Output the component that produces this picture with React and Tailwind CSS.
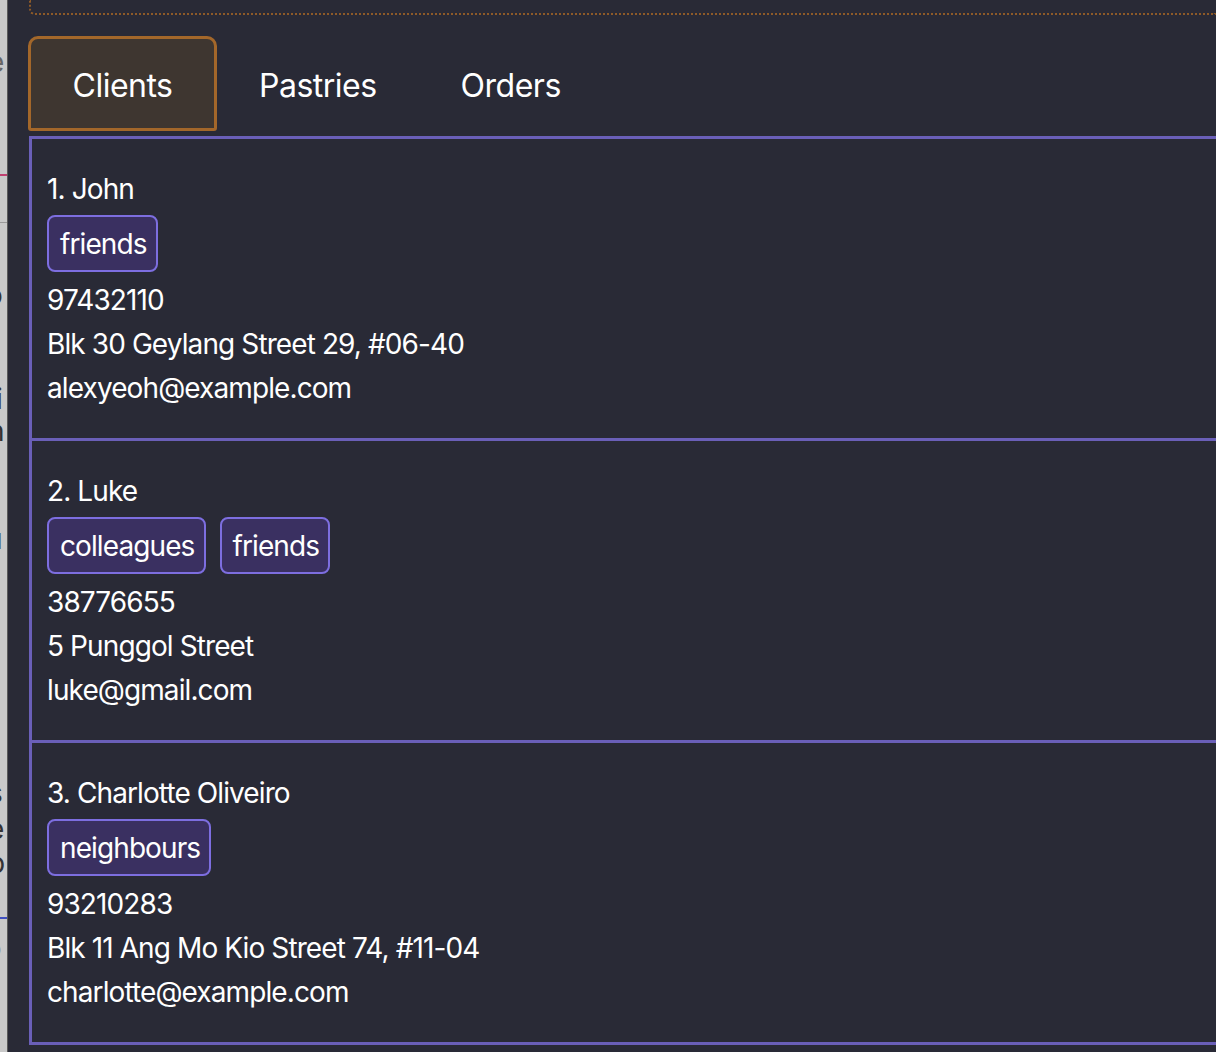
import React, { useState } from "react";

const clients = [
  {
    id: 1,
    name: "John",
    tags: ["friends"],
    phone: "97432110",
    address: "Blk 30 Geylang Street 29, #06-40",
    email: "alexyeoh@example.com",
  },
  {
    id: 2,
    name: "Luke",
    tags: ["colleagues", "friends"],
    phone: "38776655",
    address: "5 Punggol Street",
    email: "luke@gmail.com",
  },
  {
    id: 3,
    name: "Charlotte Oliveiro",
    tags: ["neighbours"],
    phone: "93210283",
    address: "Blk 11 Ang Mo Kio Street 74, #11-04",
    email: "charlotte@example.com",
  },
];

const TABS = ["Clients", "Pastries", "Orders"];

function ClientCard({ index, client }) {
  return (
    <div className="border-b-[3px] border-[#6a5fb8] pl-[15px] pt-[28px] pb-[28px] leading-[44px]">
      <div>
        {index}. {client.name}
      </div>
      <div className="flex gap-[14px] mt-[4px] mb-[6px]">
        {client.tags.map((tag) => (
          <span
            key={tag}
            className="h-[57px] pl-[11px] pr-[9px] flex items-center rounded-[8px] border-2 border-[#7d6ee0] bg-[#3a3061]"
          >
            {tag}
          </span>
        ))}
      </div>
      <div>{client.phone}</div>
      <div>{client.address}</div>
      <div>{client.email}</div>
    </div>
  );
}

export default function App() {
  const [tab, setTab] = useState("Clients");

  return (
    <div className="w-[1216px] h-[1052px] overflow-hidden flex bg-[#292a36] text-white font-['Inter','Liberation_Sans',sans-serif]">
      {/* window peeking behind on the left */}
      <div className="w-[8px] shrink-0 bg-[#c9c9c9] border-r border-[#5a5a5a] overflow-hidden text-[#333] text-[28px] leading-none flex flex-col">
        <span className="mt-[48px] -ml-[12px] text-[#666]">e</span>
        <span className="mt-[98px] h-[4px] w-[8px] border-t-2 border-dashed border-[#c04070]"></span>
        <span className="mt-[44px] h-px bg-[#999]"></span>
        <span className="mt-[58px] -ml-[14px]">o</span>
        <span className="mt-[76px] -ml-[4px]">i</span>
        <span className="mt-[4px] -ml-[12px]">h</span>
        <span className="mt-[80px] -ml-[14px]">u</span>
        <span className="mt-[226px] -ml-[12px]">s</span>
        <span className="mt-[8px] -ml-[12px]">e</span>
        <span className="mt-[6px] -ml-[12px]">p</span>
        <span className="mt-[40px] h-[4px] w-[8px] border-t-2 border-dashed border-[#4050c0]"></span>
        <span className="mt-[16px] -ml-[12px] text-[#888] text-[22px]">b</span>
      </div>

      <div className="flex-1 flex flex-col pl-[20px]">
        <div className="h-[16px] shrink-0 border-l-2 border-b-2 border-dotted border-[#8d5a28] rounded-bl-[6px] -mt-px ml-[1px]"></div>

        <div className="flex items-end h-[116px] shrink-0 pt-[20px] text-[32px] tracking-[-0.5px]">
          {TABS.map((t) => (
            <button
              key={t}
              onClick={() => setTab(t)}
              className={
                t === tab
                  ? "h-[95px] w-[189px] pt-[5px] rounded-t-[10px] rounded-b-[3px] border-[3px] border-[#a3672a] bg-[#3e3630]"
                  : "h-[95px] pt-[5px] px-[42px]"
              }
            >
              {t}
            </button>
          ))}
        </div>

        <div className="mt-[5px] border-t-[3px] border-l-[3px] border-[#6a5fb8] text-[28px] tracking-[-0.9px] ml-[1px]">
          {clients.map((c, i) => (
            <ClientCard key={c.id} index={i + 1} client={c} />
          ))}
        </div>
      </div>
    </div>
  );
}
